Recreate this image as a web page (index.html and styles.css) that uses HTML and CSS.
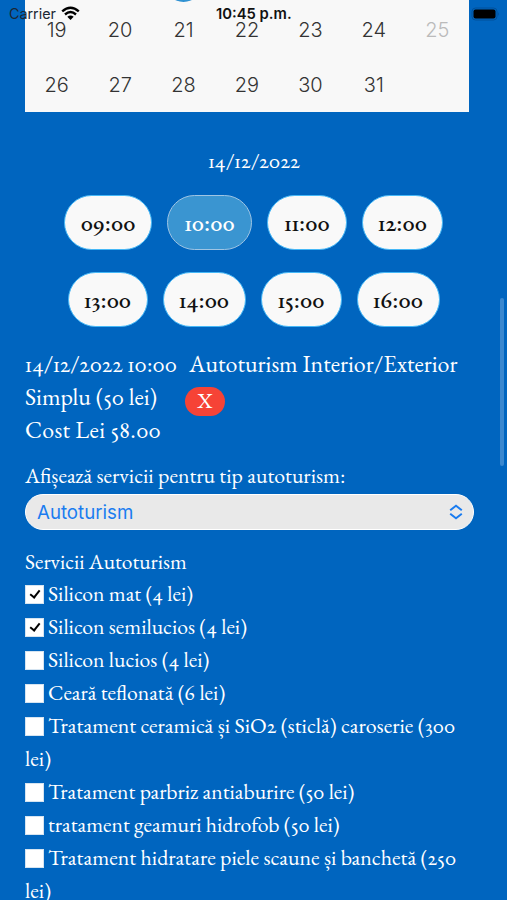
FILE: index.html
```
<!DOCTYPE html>
<html lang="ro">
<head>
    <meta charset="UTF-8">
    <title>Programare</title>
    <link rel="stylesheet" href="styles.css">
</head>
<body>
<div id="status">
    <div class="carrier">
        <span>Carrier</span>
        <svg width="19" height="15" viewBox="0 0 19 15">
            <path d="M1.2 5.3Q9.5 -2 17.8 5.3M4 8.5Q9.5 3.7 15 8.5" fill="none" stroke="#000" stroke-width="2.4"/>
            <path d="M6.3 10.8Q9.5 8.2 12.7 10.8L9.5 14Z"/>
        </svg>
    </div>
    <div class="clock">10:45 p.m.</div>
    <svg class="battery" width="30" height="14" viewBox="0 0 30 14">
        <rect x="1" y="1" width="25" height="12" rx="3.5" fill="none" stroke="#00509a"/>
        <rect x="2.5" y="2.5" width="22" height="9" rx="2"/>
        <path d="M27.3 5v4q1.7-2 0-4" fill="#00509a"/>
    </svg>
</div>
<div id="calendar">
    <i class="today"></i>
    <span>19</span><span>20</span><span>21</span><span>22</span><span>23</span><span>24</span><span class="off">25</span>
    <span>26</span><span>27</span><span>28</span><span>29</span><span>30</span><span>31</span>
</div>
<div id="content">
    <p class="date">14/12/2022</p>
    <div class="hours">
        <button class="w88">09:00</button>
        <button class="w85 select">10:00</button>
        <button class="w80">11:00</button>
        <button class="w81">12:00</button>
    </div>
    <div class="hours">
        <button class="w80">13:00</button>
        <button class="w83">14:00</button>
        <button class="w81">15:00</button>
        <button class="w83">16:00</button>
    </div>
    <div class="summary">
        <p><span class="when">14/12/2022 10:00</span><span>Autoturism Interior/Exterior</span></p>
        <p><span class="simple">Simplu (50 lei)</span><span class="remove">X</span></p>
        <p class="cost">Cost Lei 58.00</p>
    </div>
    <p class="label">Afișează servicii pentru tip autoturism:</p>
    <div class="dropdown">
        <span>Autoturism</span>
        <svg width="14" height="16" viewBox="0 0 14 16">
            <path d="M1.2 6.2L7 1.8l5.8 4.4M1.2 9.8L7 14.2l5.8-4.4" fill="none" stroke="#1a7cf0" stroke-width="2"/>
        </svg>
    </div>
    <p class="title">Servicii Autoturism</p>
    <ul id="services">
        <li><i class="box on"></i>Silicon mat (4 lei)</li>
        <li><i class="box on"></i>Silicon semilucios (4 lei)</li>
        <li><i class="box"></i>Silicon lucios (4 lei)</li>
        <li><i class="box"></i>Ceară teflonată (6 lei)</li>
        <li class="long"><i class="box"></i>Tratament ceramică și SiO2 (sticlă) caroserie (300<br>lei)</li>
        <li><i class="box"></i>Tratament parbriz antiaburire (50 lei)</li>
        <li><i class="box"></i>tratament geamuri hidrofob (50 lei)</li>
        <li class="long"><i class="box"></i>Tratament hidratare piele scaune și banchetă (250<br>lei)</li>
    </ul>
</div>
<div id="scroll"></div>
</body>
</html>
```
FILE: styles.css
```
*{
    margin: 0;
    padding: 0;
    box-sizing: border-box;
}
body{
    position: relative;
    height: 900px;
    overflow: hidden;
    background: #0065bf;
    color: #fff;
    font-family: "EB Garamond", "Liberation Serif", serif;
    font-size: 21.7px;
    font-variant-numeric: oldstyle-nums proportional-nums;
    white-space: nowrap;
}
ul{
    list-style: none;
}

/* status bar lies over the scrolled page */
#status{
    position: absolute;
    left: 0;
    top: 0;
    z-index: 2;
    width: 507px;
    height: 27px;
    display: flex;
    align-items: center;
    justify-content: space-between;
    padding: 0 5px 0 9px;
    color: #111;
    font-family: Inter, sans-serif;
    font-size: 14.3px;
    font-variant-numeric: normal;
}
.carrier{
    display: flex;
    align-items: center;
    gap: 5px;
    width: 207px;
    color: #1b2733;
}
.clock{
    font-weight: 600;
    font-size: 14.8px;
    flex: 1;
}
.battery{
    margin-right: 1px;
}

#calendar{
    position: relative;
    width: 444px;
    height: 112px;
    margin-left: 25px;
    padding-top: 3px;
    overflow: hidden;
    display: grid;
    grid-template-columns: repeat(7, 1fr);
    grid-auto-rows: 55px;
    background: #f8f8f8;
    color: #333;
    font-family: Inter, sans-serif;
    font-size: 20px;
    font-weight: 300;
    font-variant-numeric: normal;
    line-height: 55px;
    text-align: center;
}
#calendar .off{
    color: #bbb;
}
.today{
    position: absolute;
    left: 140px;
    top: -35px;
    width: 37px;
    height: 37px;
    border-radius: 50%;
    background: #3192d2;
}

#content{
    padding: 0 33px 0 25px;
}
.date{
    margin: 32px 0 19px 9px;
    font-size: 22.4px;
    line-height: 32px;
    text-align: center;
}
.hours{
    display: flex;
    justify-content: center;
    gap: 15px;
    height: 55px;
    margin: 0 0 22px 8px;
}
.hours button{
    height: 55px;
    border: 1px solid #45b8f7;
    border-radius: 28px;
    background: #f9f9f9;
    color: #111;
    font: inherit;
    font-size: 24px;
    font-weight: 500;
}
.hours .select{
    border-color: #9fc5e4;
    background: #3a95d1;
    color: #fff;
}
.w80{ width: 80px; }
.w81{ width: 81px; }
.w83{ width: 83px; }
.w85{ width: 85px; }
.w88{ width: 88px; }

.summary{
    margin-top: -2px;
    font-size: 23.9px;
    line-height: 33px;
}
.summary p{
    display: flex;
    height: 33px;
}
.when{
    width: 164px;
}
.simple{
    width: 160px;
}
.cost{
    letter-spacing: 0.3px;
}
.remove{
    width: 40px;
    height: 29px;
    margin-top: 7px;
    border-radius: 15px;
    background: #f64336;
    font-size: 21.7px;
    line-height: 26px;
    text-align: center;
}
.label{
    margin-top: 12px;
    font-size: 21.8px;
    line-height: 34px;
}
.dropdown{
    width: 449px;
    height: 36px;
    margin-top: 2px;
    padding: 0 10px 0 11px;
    display: flex;
    align-items: center;
    justify-content: space-between;
    border: 1px solid #fff;
    border-radius: 18px;
    background: #e9e9e9;
    color: #1a7cf0;
    font-family: Inter, sans-serif;
    font-size: 18.7px;
}
.title{
    margin-top: 15px;
    font-size: 21.5px;
    line-height: 32px;
}
#services li{
    height: 33px;
    line-height: 33px;
}
#services .long{
    height: 66px;
    font-size: 21.9px;
}
.box{
    display: inline-block;
    position: relative;
    width: 19px;
    height: 19px;
    margin-right: 4px;
    border: 1px solid #d5e4f1;
    background: #fff;
    vertical-align: -3px;
}
.box.on::after{
    content: "";
    position: absolute;
    left: 6px;
    top: 2px;
    width: 4px;
    height: 8px;
    border: solid #000;
    border-width: 0 2.5px 2.5px 0;
    transform: rotate(38deg);
}

#scroll{
    position: absolute;
    left: 500px;
    top: 298px;
    width: 4px;
    height: 168px;
    border-radius: 2px;
    background: #3a88cf;
}
```
